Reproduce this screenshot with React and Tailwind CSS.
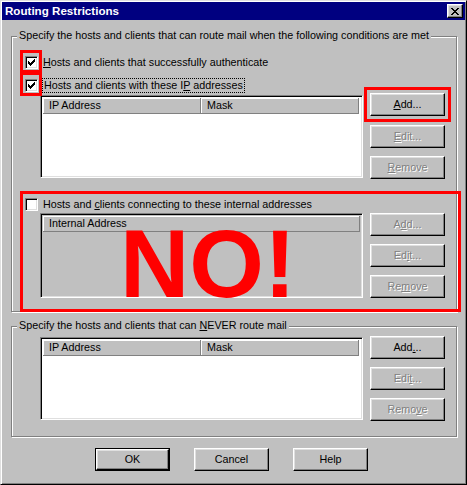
import React from 'react';

const raised =
  'border border-t-white border-l-white border-r-black border-b-black shadow-[inset_-1px_-1px_0_#808080,inset_1px_1px_0_#dfdfdf]';
const sunken =
  'border border-t-[#808080] border-l-[#808080] border-r-white border-b-white shadow-[inset_1px_1px_0_#000,inset_-1px_-1px_0_#dfdfdf]';
const disabledText = 'text-[#808080] [text-shadow:1px_1px_0_#fff]';

const checkPixels = [
  [6, 0, 1], [5, 1, 2], [0, 2, 1], [4, 2, 3], [0, 3, 2],
  [3, 3, 3], [0, 4, 5], [1, 5, 3], [2, 6, 1],
];

const Checkbox = ({ checked }) => (
  <div className={`w-[13px] h-[13px] shrink-0 bg-white flex items-center justify-center ${sunken}`}>
    {checked && (
      <svg width="7" height="7" viewBox="0 0 7 7" shapeRendering="crispEdges">
        {checkPixels.map(([x, y, w]) => (
          <rect key={`${x}-${y}`} x={x} y={y} width={w} height="1" fill="#000" />
        ))}
      </svg>
    )}
  </div>
);

const Button = ({ children, disabled, className = '' }) => (
  <div
    className={`w-[75px] h-[23px] shrink-0 flex items-center justify-center bg-[#c0c0c0] ${raised} ${
      disabled ? disabledText : 'text-black'
    } ${className}`}
  >
    {children}
  </div>
);

const HeaderCell = ({ children, className = '' }) => (
  <div
    className={`h-[16px] flex items-center pl-[6px] bg-[#c0c0c0] border-r border-b border-[#808080] shadow-[inset_1px_1px_0_#fff] ${className}`}
  >
    {children}
  </div>
);

const AddressList = ({ className = '' }) => (
  <div className={`w-[323px] bg-white p-[2px] ${sunken} ${className}`}>
    <div className="flex">
      <HeaderCell className="w-[158px]">IP Address</HeaderCell>
      <HeaderCell className="w-[158px]">Mask</HeaderCell>
    </div>
  </div>
);

const GroupBox = ({ legend, className = '', children }) => (
  <div
    className={`relative w-[446px] ml-[9px] border border-[#808080] shadow-[1px_1px_0_#fff,inset_1px_1px_0_#fff] ${className}`}
  >
    <span className="absolute left-[5px] -top-[8px] px-[2px] bg-[#c0c0c0] leading-[13px]">{legend}</span>
    {children}
  </div>
);

const RedBox = ({ className = '' }) => (
  <div className={`absolute border-[3px] border-[#ff0000] pointer-events-none ${className}`} />
);

export default function App() {
  return (
    <div className="w-[467px] h-[485px] bg-[#c0c0c0] p-[1px] border border-t-[#dfdfdf] border-l-[#dfdfdf] border-r-black border-b-black shadow-[inset_1px_1px_0_#fff,inset_-1px_-1px_0_#808080] font-['Liberation_Sans',Arial,sans-serif] text-[10.75px] text-black overflow-hidden">
      {/* title bar */}
      <div className="h-[18px] bg-[#000080] flex items-center justify-between pl-[3px] pr-[2px]">
        <span className="text-white font-bold text-[11.6px]">Routing Restrictions</span>
        <div className={`w-[16px] h-[14px] bg-[#c0c0c0] flex items-center justify-center ${raised}`}>
          <svg width="8" height="7" viewBox="0 0 8 7" shapeRendering="crispEdges">
            <path d="M0 0h2v1h1v1h2v-1h1v-1h2v1h-1v1h-1v1h-1v1h1v1h1v1h1v1h-2v-1h-1v-1h-2v1h-1v1h-2v-1h1v-1h1v-1h1v-1h-1v-1h-1v-1h-1z" fill="#000" />
          </svg>
        </div>
      </div>

      {/* upper group */}
      <GroupBox
        legend="Specify the hosts and clients that can route mail when the following conditions are met"
        className="mt-[16px] h-[276px]"
      >
        <div className="flex flex-col pl-[13px]">
          <div className="flex items-center h-[13px] mt-[19px]">
            <div className="relative">
              <Checkbox checked />
              <RedBox className="-left-[5px] -top-[6px] w-[22px] h-[23px]" />
            </div>
            <span className="ml-[5px]">
              <u>H</u>osts and clients that successfully authenticate
            </span>
          </div>

          <div className="flex items-center h-[13px] mt-[10px]">
            <div className="relative">
              <Checkbox checked />
              <RedBox className="-left-[5px] -top-[7px] w-[22px] h-[24px]" />
            </div>
            <span className="ml-[4px] px-[1px] border border-dotted border-black leading-[13px]">
              Hosts and clients with these I<u>P</u> addresses
            </span>
          </div>

          <div className="flex items-start mt-[1px]">
            <AddressList className="ml-[15px] mt-[2px] h-[83px]" />
            <div className="flex flex-col ml-[7px]">
              <div className="relative">
                <Button>
                  <u>A</u>dd...
                </Button>
                <RedBox className="-inset-[6px]" />
              </div>
              <Button disabled className="mt-[9px]">
                <u>E</u>dit...
              </Button>
              <Button disabled className="mt-[8px]">
                <u>R</u>emove
              </Button>
            </div>
          </div>

          {/* internal addresses section */}
          <div className="relative mt-[19px]">
            <div className="flex items-center h-[13px]">
              <Checkbox />
              <span className="ml-[5px]">
                Hosts and <u>c</u>lients connecting to these internal addresses
              </span>
            </div>
            <div className="flex items-start mt-[2px]">
              <div className={`w-[323px] h-[85px] ml-[15px] bg-[#c0c0c0] p-[2px] ${sunken}`}>
                <HeaderCell className="w-full">Internal Address</HeaderCell>
              </div>
              <div className="flex flex-col ml-[7px]">
                <Button disabled>
                  A<u>d</u>d...
                </Button>
                <Button disabled className="mt-[8px]">
                  Ed<u>i</u>t...
                </Button>
                <Button disabled className="mt-[8px]">
                  Re<u>m</u>ove
                </Button>
              </div>
            </div>
            <RedBox className="-left-[5px] -right-[5px] -top-[7px] -bottom-[14px]" />
            <span className="absolute left-[95px] top-[18px] text-[96px] leading-none font-bold text-[#ff0000] pointer-events-none">
              NO!
            </span>
          </div>
        </div>
      </GroupBox>

      {/* lower group */}
      <GroupBox
        legend={
          <>
            Specify the hosts and clients that can <u>N</u>EVER route mail
          </>
        }
        className="mt-[14px] h-[111px]"
      >
        <div className="flex items-start pl-[28px] pt-[9px]">
          <AddressList className="mt-[1px] h-[83px]" />
          <div className="flex flex-col ml-[7px]">
            <Button>
              Add<u>.</u>..
            </Button>
            <Button disabled className="mt-[8px]">
              Edi<u>t</u>...
            </Button>
            <Button disabled className="mt-[8px]">
              Remo<u>v</u>e
            </Button>
          </div>
        </div>
      </GroupBox>

      {/* dialog buttons */}
      <div className="flex gap-[24px] pl-[93px] mt-[11px]">
        <div className="w-[75px] h-[23px] border border-black">
          <div className={`w-full h-full flex items-center justify-center ${raised}`}>OK</div>
        </div>
        <Button>Cancel</Button>
        <Button>Help</Button>
      </div>
    </div>
  );
}
